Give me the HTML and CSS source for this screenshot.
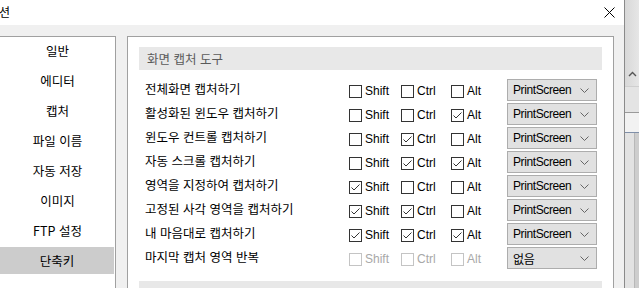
FILE: index.html
```html
<!DOCTYPE html>
<html lang="ko">
<head>
    <meta charset="UTF-8">
    <title>옵션</title>
    <link rel="stylesheet" href="styles.css">
</head>
<body>
    <div class="screen">
        <div class="dialog">
            <div class="titlebar">
                <span class="title">옵션</span>
                <svg class="close" width="11" height="11" viewBox="0 0 11 11">
                    <path d="M0.5 0.5 L10.5 10.5 M10.5 0.5 L0.5 10.5" stroke="#000" stroke-width="1" fill="none"/>
                </svg>
            </div>

            <div class="content">
                <!-- 왼쪽 메뉴 -->
                <nav class="nav">
                    <div class="nav-item">일반</div>
                    <div class="nav-item">에디터</div>
                    <div class="nav-item">캡처</div>
                    <div class="nav-item">파일 이름</div>
                    <div class="nav-item">자동 저장</div>
                    <div class="nav-item">이미지</div>
                    <div class="nav-item">FTP 설정</div>
                    <div class="nav-item active">단축키</div>
                </nav>

                <!-- 단축키 설정 -->
                <section class="panel">
                    <div class="group-title">화면 캡처 도구</div>
                    <div class="rows" id="rows"></div>
                    <div class="group-title"></div>
                </section>
            </div>
        </div>

        <!-- 뒤에 있는 창 -->
        <div class="behind">
            <div class="bh-top">
                <svg class="bh-chevron" width="9" height="6" viewBox="0 0 9 6">
                    <path d="M1 5 L4.5 1.5 L8 5" stroke="#555" stroke-width="1.4" fill="none"/>
                </svg>
            </div>
            <div class="bh-mid"></div>
            <div class="bh-light"></div>
            <div class="bh-ruler"></div>
            <div class="bh-bottom">
                <div class="bh-left"></div>
                <div class="bh-right"></div>
            </div>
        </div>
    </div>

    <script>
        const shortcuts = [
            { name: '전체화면 캡처하기', shift: false, ctrl: false, alt: false, key: 'PrintScreen' },
            { name: '활성화된 윈도우 캡처하기', shift: false, ctrl: false, alt: true, key: 'PrintScreen' },
            { name: '윈도우 컨트롤 캡처하기', shift: false, ctrl: true, alt: false, key: 'PrintScreen' },
            { name: '자동 스크롤 캡처하기', shift: false, ctrl: true, alt: true, key: 'PrintScreen' },
            { name: '영역을 지정하여 캡처하기', shift: true, ctrl: false, alt: false, key: 'PrintScreen' },
            { name: '고정된 사각 영역을 캡처하기', shift: true, ctrl: true, alt: false, key: 'PrintScreen' },
            { name: '내 마음대로 캡처하기', shift: true, ctrl: true, alt: true, key: 'PrintScreen' },
            { name: '마지막 캡처 영역 반복', shift: false, ctrl: false, alt: false, key: '없음', disabled: true }
        ];

        const check = '<svg width="11" height="11" viewBox="0 0 11 11"><path d="M1.5 5.5 L4 8 L9.5 2.5" stroke="#333" stroke-width="1" fill="none"/></svg>';
        const chevron = '<svg class="chev" width="9" height="5" viewBox="0 0 9 5"><path d="M0.5 0.5 L4.5 4.5 L8.5 0.5" stroke="#666" stroke-width="1" fill="none"/></svg>';

        function checkbox(label, checked, disabled) {
            return `
                <label class="check${disabled ? ' disabled' : ''}">
                    <span class="box">${checked ? check : ''}</span>
                    <span>${label}</span>
                </label>`;
        }

        const rows = document.getElementById('rows');
        shortcuts.forEach(item => {
            const row = document.createElement('div');
            row.className = 'row';
            row.innerHTML = `
                <span class="label">${item.name}</span>
                ${checkbox('Shift', item.shift, item.disabled)}
                ${checkbox('Ctrl', item.ctrl, item.disabled)}
                ${checkbox('Alt', item.alt, item.disabled)}
                <div class="select"><span>${item.key}</span>${chevron}</div>
            `;
            rows.appendChild(row);
        });
    </script>
</body>
</html>
```

FILE: styles.css
```css
html, body {
    margin: 0;
    padding: 0;
}
body {
    width: 639px;
    height: 288px;
    overflow: hidden;
    font-family: "Liberation Sans", "Noto Sans CJK KR", sans-serif;
    font-size: 12px;
    color: #000;
    background-color: #f0f0f0;
}
.screen {
    display: flex;
    height: 288px;
}
.dialog {
    width: 625px;
    flex-shrink: 0;
    box-sizing: border-box;
    border-right: 1px solid #8a8a8a;
    background-color: #f0f0f0;
    overflow: hidden;
}
.titlebar {
    height: 25px;
    background-color: #fff;
    display: flex;
    align-items: center;
    justify-content: space-between;
    padding-right: 9px;
    overflow: hidden;
}
.title {
    margin-left: -12px;
    font-family: "Noto Sans CJK KR", sans-serif;
    line-height: 16px;
    margin-top: -2px;
}
.close {
    margin-top: -1px;
}
.content {
    display: flex;
    gap: 11px;
    padding-top: 11px;
    height: 252px;
}
.nav {
    width: 117px;
    margin-left: -1px;
    box-sizing: border-box;
    border: 1px solid #a0a0a0;
    border-bottom: none;
    background-color: #fff;
    display: flex;
    flex-direction: column;
    gap: 3px;
    padding-left: 1px;
}
.nav-item {
    height: 27px;
    margin-right: 1px;
    display: flex;
    align-items: center;
    justify-content: center;
    line-height: 16px;
    font-family: "Noto Sans CJK KR", sans-serif;
    font-size: 12.5px;
}
.nav-item.active {
    background-color: #cccccc;
    margin-left: -1px;
}
.panel {
    width: 487px;
    box-sizing: border-box;
    border: 1px solid #a0a0a0;
    border-bottom: none;
    background-color: #fff;
    padding: 10px 11px 0 11px;
}
.group-title {
    height: 23px;
    background-color: #e8e8e8;
    color: #5a5a5a;
    padding-left: 8px;
    display: flex;
    align-items: center;
    font-family: "Noto Sans CJK KR", sans-serif;
    font-size: 12.5px;
    line-height: 16px;
}
.rows {
    padding: 9px 0 10px 6px;
}
.row {
    display: grid;
    grid-template-columns: 204px 52px 50px 56px 90px;
    align-items: center;
    height: 24px;
}
.label {
    font-family: "Noto Sans CJK KR", sans-serif;
    font-size: 12.5px;
    line-height: 16px;
    margin-top: -4px;
}
.check {
    display: flex;
    align-items: center;
    gap: 3px;
    font-size: 12px;
}
.box {
    width: 13px;
    height: 13px;
    box-sizing: border-box;
    border: 1px solid #333;
    background-color: #fff;
    display: flex;
    align-items: center;
    justify-content: center;
}
.check.disabled {
    color: #a8a8a8;
}
.check.disabled .box {
    border-color: #c4c4c4;
}
.select {
    height: 22px;
    box-sizing: border-box;
    border: 1px solid #adadad;
    background-color: #e1e1e1;
    display: flex;
    align-items: center;
    justify-content: space-between;
    padding: 0 7px 0 5px;
    margin-top: -2px;
    font-size: 12px;
    letter-spacing: -0.4px;
}
.behind {
    flex: 1;
    display: flex;
    flex-direction: column;
}
.bh-top {
    height: 87px;
    background: linear-gradient(to right, #d8d8d8, #e6e6e6);
    border-bottom: 1px solid #cfcfcf;
    display: flex;
    align-items: flex-end;
    justify-content: center;
    box-sizing: border-box;
}
.bh-chevron {
    margin-bottom: 9px;
}
.bh-mid {
    height: 25px;
    background-color: #e4e4e4;
    border-bottom: 1px solid #9a9a9a;
}
.bh-light {
    height: 19px;
    background-color: #f2f2f2;
}
.bh-ruler {
    height: 1px;
    background-color: #7f8fa8;
}
.bh-bottom {
    flex: 1;
    display: flex;
}
.bh-left {
    width: 9px;
    background-color: #e2e2e2;
    border-right: 1px solid #b8b8b8;
}
.bh-right {
    flex: 1;
    background-color: #cdcdcd;
}
```
